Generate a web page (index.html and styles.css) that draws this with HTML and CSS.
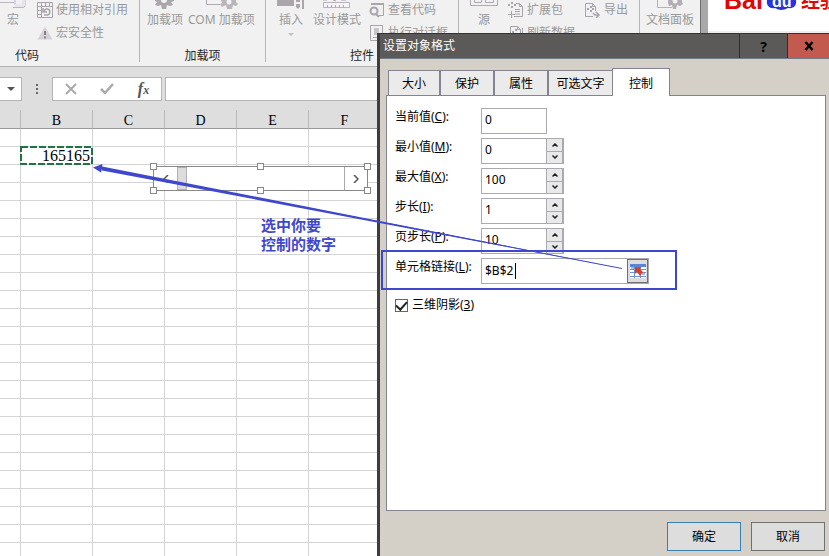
FILE: index.html
```html
<!DOCTYPE html>
<html lang="zh-CN">
<head>
<meta charset="utf-8">
<title>设置对象格式</title>
<link rel="stylesheet" href="styles.css">
</head>
<body>
<main class="screen">
  <div class="topbar">
    <div class="ribbon">
      <section class="group group-code">
        <div class="tools">
          <button class="big big-macro"><svg class="art" width="28" height="10" viewBox="0 0 28 10"><path d="M0 2.500H15M14 7.500H24a2 2 0 0 0 2-2V0M16 0v5" fill="none" stroke="#bdb5c3"/><path d="M15 4l2 3h7l2-2V0h-3v5z" fill="#e9e4ec"/></svg>宏</button>
          <div class="stack">
            <button class="small"><svg width="16" height="16" viewBox="0 0 16 16" fill="none" stroke="#a9a4ac"><path d="M.5.500h15v15H.5zM.5 4.500h15M4.500.500v15M8.500.500v4M12.500.500v4M.5 8.500h4M.5 12.500h4"/><path d="M7 13h3a3 3 0 1 0-3-4M6 6v4h4" stroke-width="1.500"/></svg>使用相对引用</button>
            <button class="small"><svg width="16" height="16" viewBox="0 0 16 16"><path d="M8 1.500l7.500 13H.5z" fill="#d8d2d8"/><path d="M8 6v4M8 11.500v2" stroke="#858585" stroke-width="2"/></svg>宏安全性</button>
          </div>
        </div>
        <h2>代码</h2>
      </section>
      <section class="group group-addins">
        <div class="tools">
          <button class="big"><svg class="art" width="22" height="10" viewBox="0 0 22 10"><path d="M1 0h19v1l-3 1 2 3-3 1-3-1-1 4H8L7 5 4 6 1 5l2-3-2-1z" fill="#aaa6aa"/><path d="M7 0h6a3 3 0 0 1-6 0z" fill="#f1f1f1"/></svg>加载项</button>
          <button class="big"><svg class="art" width="36" height="10" viewBox="0 0 36 10"><path d="M3.500 0v4.500H17" fill="none" stroke="#b0a6b4"/><path d="M18 0h15v2l2 2-2 2-3-1-1 4h-5l-1-4-4 2-2-3 2-1z" fill="#bab5bb"/><circle cx="26" cy="2" r="2.500" fill="#f1f1f1"/></svg>COM 加载项</button>
        </div>
        <h2>加载项</h2>
      </section>
      <section class="group group-controls">
        <div class="tools">
          <button class="big"><svg class="art" width="28" height="10" viewBox="0 0 28 10"><path d="M0 0h17v6H0zM19 0h4v2h-4zM19 4h4v3l-2 2-2-2zM25 0h2v9h-2z" fill="#aaa6aa"/></svg>插入<svg class="drop" width="6" height="4" viewBox="0 0 6 4"><path d="M0 0h6L3 3z" fill="#c0c0c0"/></svg></button>
          <button class="big"><svg class="art" width="28" height="10" viewBox="0 0 28 10"><path d="M.5 2.500h26v5H.5z" fill="#f7f3f9" stroke="#bbb1c0"/><path d="M4.500 5v2M8.500 5v2M12.500 5v2M16.500 5v2M20.500 5v2M0 0h4M10 0l3 1M18 0h5" stroke="#aaa6aa"/></svg>设计模式</button>
          <div class="stack">
            <button class="small"><svg width="16" height="16" viewBox="0 0 16 16" fill="none" stroke="#a9a4ac"><path d="M3 1.500h11.500v12H10"/><path d="M2 1h13v2H2z" fill="#aaa6aa" stroke="none"/><circle cx="5" cy="9" r="3.500" stroke-width="2"/><path d="M7 12l3 3" stroke-width="2"/></svg>查看代码</button>
            <button class="small"><svg width="16" height="16" viewBox="0 0 16 16" fill="none" stroke="#a9a4ac"><path d="M1.500.500h12v15h-12z"/><path d="M5 3h5v7H5z" fill="#c9c4ca" stroke="none"/><path d="M4 12.500h7"/></svg>执行对话框</button>
          </div>
        </div>
        <h2>控件</h2>
      </section>
      <section class="group group-xml">
        <div class="tools">
          <button class="big"><svg class="art" width="28" height="10" viewBox="0 0 28 10" fill="none" stroke="#b0a9b3"><path d="M.5 0v5.500h27V0M4.500 0v2.500h7V0M15.500 0v2.500h8V0"/></svg>源</button>
          <div class="stack">
            <button class="small"><svg width="16" height="16" viewBox="0 0 16 16" fill="none" stroke="#a9a4ac"><path d="M8 1.500h3.500l3 3v10H6M11.500 1.500v3h3M7 7.500h5M7 9.500h5M7 12h5M3.500 9v7M0 12.500h7"/><path d="M0 3h2M3 1h2M3 5h2M6 3h2" stroke-width="2"/></svg>扩展包</button>
            <button class="small"><svg width="16" height="16" viewBox="0 0 16 16" fill="none" stroke="#a9a4ac"><path d="M2.500 15V1.500h7l3 3V8M9.500 1.500v3h3M14.500 3v10"/><path d="M4 7h2M7 5h2M7 9h2" stroke-width="2"/></svg>刷新数据</button>
          </div>
          <div class="stack">
            <button class="small"><svg width="16" height="16" viewBox="0 0 16 16" fill="none" stroke="#a9a4ac"><path d="M8 14.500H.5v-13h7l3 3V9M7.500 1.500v3h3"/><path d="M2 7h2M5 5h2M5 9h2M7 7h2" stroke-width="2"/><path d="M8 11l2 2h4M11 10l3 3-3 3" stroke-width="1.500"/></svg>导出</button>
          </div>
        </div>
      </section>
      <section class="group group-modify">
        <div class="tools">
          <button class="big"><svg class="art" width="28" height="10" viewBox="0 0 28 10"><path d="M1.500 0v7.500H16" fill="none" stroke="#b7afbb"/><path d="M12 0h14v2l1 2-3 2-3-1-1 4h-3l-1-4-3 1-1-3z" fill="#b3aeb4"/><circle cx="19" cy="1" r="2.500" fill="#f1f1f1"/></svg>文档面板</button>
        </div>
      </section>
    </div>
    <aside class="brand">
      <svg width="112" height="31" viewBox="0 0 112 31" role="img" aria-label="Baidu 经验">
        <text x="7" y="9" class="logo-red logo-latin">Bai</text>
        <path d="M50 0C49 6 53 9 58 8Q64 12 71 8C77 9 80 5 79 0z" fill="#2932e1"/>
        <text x="55" y="7" class="logo-du">du</text>
        <text x="84" y="8" class="logo-red logo-cjk">经验</text>
      </svg>
    </aside>
  </div>

  <div class="formula">
    <button class="namebox" aria-label="名称框"><svg width="8" height="4" viewBox="0 0 8 4"><path d="M0 0h8L4 4z" fill="#555"/></svg></button>
    <svg class="dots" width="2" height="10" viewBox="0 0 2 10"><path d="M0 0h2v2H0zM0 4h2v2H0zM0 8h2v2H0z" fill="#666"/></svg>
    <div class="fxbox">
      <button aria-label="取消输入"><svg width="12" height="12" viewBox="0 0 12 12"><path d="M1 1l10 10M11 1L1 11" stroke="#aaa" stroke-width="2"/></svg></button>
      <button aria-label="输入"><svg width="14" height="12" viewBox="0 0 14 12"><path d="M1 6l4 4 8-9" fill="none" stroke="#aaa" stroke-width="2.500"/></svg></button>
      <button class="fx" aria-label="插入函数">f<small>x</small></button>
    </div>
    <input class="formula-input" type="text" aria-label="编辑栏">
  </div>

  <div class="sheet">
    <table class="cells">
      <colgroup><col class="col-first"><col class="col"><col class="col"><col class="col"><col class="col"><col class="col"><col></colgroup>
      <thead><tr><th></th><th>B</th><th>C</th><th>D</th><th>E</th><th>F</th><th></th></tr></thead>
      <tbody id="rows"></tbody>
    </table>
    <svg class="ants" width="73" height="19" viewBox="0 0 73 19"><rect x="1" y="1" width="71" height="17" fill="none" stroke="#217346" stroke-width="2" stroke-dasharray="7 2"/></svg>
    <div class="scroller">
      <button aria-label="减小"><svg width="6" height="8" viewBox="0 0 6 8"><path d="M5 0L1 4l4 4" fill="none" stroke="#555" stroke-width="1.500"/></svg></button>
      <span class="thumb"></span>
      <button class="more" aria-label="增大"><svg width="6" height="8" viewBox="0 0 6 8"><path d="M1 0l4 4-4 4" fill="none" stroke="#555" stroke-width="1.500"/></svg></button>
      <i class="grip tl"></i><i class="grip tc"></i><i class="grip tr"></i><i class="grip bl"></i><i class="grip bc"></i><i class="grip br"></i>
    </div>
    <p class="note">选中你要<br>控制的数字</p>
  </div>

  <section class="dialog" role="dialog" aria-labelledby="dialog-title">
    <header class="titlebar">
      <h1 id="dialog-title">设置对象格式</h1>
      <button class="help" aria-label="帮助">?</button>
      <button class="close" aria-label="关闭"><svg width="10" height="10" viewBox="0 0 10 10"><path d="M1.500 1l7 8M8.500 1l-7 8" stroke="#000" stroke-width="2.500"/></svg></button>
    </header>
    <nav class="tabs" role="tablist">
      <button role="tab" class="tab">大小</button>
      <button role="tab" class="tab">保护</button>
      <button role="tab" class="tab">属性</button>
      <button role="tab" class="tab tab-wide">可选文字</button>
      <button role="tab" class="tab active" aria-selected="true">控制</button>
    </nav>
    <form class="panel">
      <div class="field"><label for="cur">当前值(<u>C</u>):</label><input id="cur" class="box" type="text" value="0"></div>
      <div class="field"><label for="min">最小值(<u>M</u>):</label><input id="min" class="box" type="text" value="0"><span class="spin"><button type="button" aria-label="最小值增加"><svg viewBox="0 0 6 4"><path d="M.5 3.500L3 1l2.500 2.500"/></svg></button><button type="button" aria-label="最小值减少"><svg viewBox="0 0 6 4"><path d="M.5.500L3 3 5.500.500"/></svg></button></span></div>
      <div class="field"><label for="max">最大值(<u>X</u>):</label><input id="max" class="box" type="text" value="100"><span class="spin"><button type="button" aria-label="最大值增加"><svg viewBox="0 0 6 4"><path d="M.5 3.500L3 1l2.500 2.500"/></svg></button><button type="button" aria-label="最大值减少"><svg viewBox="0 0 6 4"><path d="M.5.500L3 3 5.500.500"/></svg></button></span></div>
      <div class="field"><label for="step">步长(<u>I</u>):</label><input id="step" class="box" type="text" value="1"><span class="spin"><button type="button" aria-label="步长增加"><svg viewBox="0 0 6 4"><path d="M.5 3.500L3 1l2.500 2.500"/></svg></button><button type="button" aria-label="步长减少"><svg viewBox="0 0 6 4"><path d="M.5.500L3 3 5.500.500"/></svg></button></span></div>
      <div class="field"><label for="page">页步长(<u>P</u>):</label><input id="page" class="box" type="text" value="10"><span class="spin"><button type="button" aria-label="页步长增加"><svg viewBox="0 0 6 4"><path d="M.5 3.500L3 1l2.500 2.500"/></svg></button><button type="button" aria-label="页步长减少"><svg viewBox="0 0 6 4"><path d="M.5.500L3 3 5.500.500"/></svg></button></span></div>
      <div class="field"><label for="link">单元格链接(<u>L</u>):</label><span class="linkbox"><input id="link" type="text" value="$B$2"><i class="caret"></i><button type="button" class="picker" aria-label="选择单元格"><svg width="16" height="14" viewBox="0 0 16 14"><path d="M0 0h16v14H0z" fill="#fff"/><path d="M0 0h16v3H0z" fill="#5b86cf"/><path d="M0 5.500h16M0 8.500h16M0 12.500h16M4.500 3v11M10.500 3v11" stroke="#6f92cf"/><path d="M5 4.500h3M1 4h3M12 10h3" stroke="#9db8e6" stroke-width="2"/><path d="M5 3h6l-1 2 3 3-3 4-3-4-2 2z" fill="#d8402a"/></svg></button></span></div>
      <div class="check"><input id="shade" type="checkbox" checked><label for="shade">三维阴影(<u>3</u>)</label></div>
    </form>
    <footer class="actions"><button class="ok">确定</button><button>取消</button></footer>
  </section>

  <svg class="marks" width="829" height="556" viewBox="0 0 829 556" aria-hidden="true">
    <path d="M102 166.500L377 220.500 622 268.500 377 222.500 102 170.500z" fill="#3f48cc"/>
    <path d="M102 168.500L622 268.500" stroke="#3f48cc"/>
    <path d="M93 167.500l9.500-3.500-.5 4.500-1 4z" fill="#3f48cc"/>
    <rect x="382" y="251" width="294" height="38" fill="none" stroke="#3f48cc" stroke-width="2"/>
  </svg>
</main>
<script src="sheet.js"></script>
</body>
</html>
```
FILE: styles.css
```css
* { box-sizing: border-box; }
body { margin: 0; font: 12px/18px "Noto Sans", "Noto Sans CJK SC", sans-serif; color: #000; }
button { margin: 0; padding: 0; border: 0; background: none; font: inherit; color: inherit; }
input { font: inherit; color: inherit; }
h1, h2, p { margin: 0; font-size: 12px; font-weight: 400; }
svg { display: block; flex: none; }

.screen { position: relative; display: flex; flex-direction: column; height: 100vh; overflow: hidden; background: #fff; }

.topbar { display: flex; height: 67px; border-bottom: 1px solid #b2b2b2; background: #f1f1f1; }
.ribbon { display: flex; flex: none; color: #999; border-right: 1px solid #6f6f6f; }
.group { display: flex; flex-direction: column; width: 126px; height: 62px; border-right: 1px solid #b5b5b5; }
.group h2 { color: #262626; line-height: 20px; text-align: center; }
.group-code { width: 140px; }
.group-code h2 { padding-left: 15px; text-align: left; }
.group-controls { width: 193px; }
.group-xml { width: 181px; }
.group-modify { width: 60px; border-right: 0; }
.tools { display: flex; flex: none; height: 46px; white-space: nowrap; }
.big { display: flex; flex-direction: column; align-items: center; align-self: flex-start; line-height: 20px; }
.drop { margin-top: 3px; }
.stack { display: flex; flex: none; flex-direction: column; gap: 3px; }
.small { display: flex; align-items: center; gap: 3px; height: 20px; }
.group-code .tools { gap: 11px; }
.big-macro { width: 26px; }
.group-addins .tools { gap: 5px; padding-left: 7px; }
.group-controls .tools { gap: 8px; padding-left: 11px; }
.group-xml .tools { gap: 10px; padding-left: 11px; }
.group-modify .tools { justify-content: center; }
.brand { flex: 1; border-left: 7px solid #aaa9a9; background: linear-gradient(#fff 31px, #eee 31px); overflow: hidden; }
.brand svg { margin-left: 9px; }
.logo-red { fill: #e10602; font-weight: 700; }
.logo-latin { font-family: "Liberation Sans", sans-serif; font-size: 25px; }
.logo-cjk { font-family: "Noto Sans CJK SC", sans-serif; font-size: 19px; }
.logo-du { fill: #fff; font: 700 16px "Liberation Sans", sans-serif; }

.formula { display: flex; height: 43px; padding-top: 10px; background: #dedede; }
.namebox, .fxbox, .formula-input { height: 24px; border: 1px solid #b5b5b5; background: #fff; }
.namebox { width: 22px; padding-left: 7px; border-left: 0; }
.dots { margin: 7px 14px; }
.fxbox { display: flex; justify-content: space-around; align-items: center; width: 110px; }
.fx { font: italic 700 16px/18px "Liberation Serif", serif; color: #555; }
.fx small { font-size: 12px; }
.formula-input { flex: 1; margin-left: 3px; }

.sheet { position: relative; flex: 1; overflow: hidden; }
.cells { width: 100%; table-layout: fixed; border-collapse: separate; border-spacing: 0; font-family: "Liberation Serif", serif; }
.col-first { width: 21px; }
.col { width: 72px; }
.cells th { height: 19px; padding: 3px 0 0; border-right: 1px solid #b8b8b8; border-bottom: 1px solid #999; background: #dedede; font-size: 14px; line-height: 15px; font-weight: 400; }
.cells td { height: 18px; padding: 0 2px; border-right: 1px solid #d4d4d4; border-bottom: 1px solid #d4d4d4; font-size: 16px; line-height: 17px; text-align: right; }
.ants { position: absolute; left: 20px; top: 36px; }
.scroller { position: absolute; left: 153px; top: 56px; display: flex; width: 215px; height: 25px; border: 1px solid #888; background: #fff; }
.scroller button { display: grid; place-items: center; width: 23px; }
.thumb { width: 10px; border: 1px solid #b0b0b0; background: #dcdcdc; }
.scroller .more { margin-left: auto; border-left: 1px solid #aaa; }
.grip { position: absolute; width: 7px; height: 7px; border: 1px solid #888; background: #fff; }
.tl, .tc, .tr { top: -4px; }
.bl, .bc, .br { bottom: -4px; }
.tl, .bl { left: -4px; }
.tc, .bc { left: 103px; }
.tr, .br { right: -4px; }
.note { position: absolute; left: 261px; top: 106px; font-size: 15px; line-height: 19px; font-weight: 700; color: #3f48cc; }

.dialog { position: absolute; left: 377px; top: 33px; right: 0; bottom: 0; display: flex; flex-direction: column; border-left: 3px solid #3d3d40; background: #d4d0c8; }
.titlebar { display: flex; height: 26px; border-top: 1px solid #333; border-bottom: 1px solid #737986; background: #5b5a58; color: #fff; }
.titlebar h1 { flex: 1; padding-left: 3px; line-height: 24px; }
.titlebar button { display: grid; place-items: center; width: 48px; border-left: 1px solid #2e2e2e; color: #000; }
.titlebar .help { font: 700 14px "Noto Sans", sans-serif; }
.titlebar .close { width: 42px; background: #c25a50; }
.tabs { display: flex; align-items: flex-end; height: 37px; padding-left: 8px; }
.tab { width: 54px; height: 26px; padding-top: 2px; border: 1px solid #84848f; background: #ebebeb; }
.tab:first-child { width: 52px; }
.tab-wide { width: 65px; }
.active { z-index: 1; width: 58px; height: 28px; margin-left: -1px; border-bottom: 0; background: #fff; }
.panel { display: flex; flex: 1; flex-direction: column; gap: 4px; margin: -1px 3px 0 6px; padding: 12px 8px; border: 1px solid #84848f; background: #fff; }
.field { display: flex; height: 26px; }
.field label { width: 86px; }
.box, .linkbox { width: 66px; height: 26px; border: 1px solid #aaaab2; border-radius: 0; background: #fff; }
.box { padding: 0 0 4px 3px; }
.spin { display: flex; flex-direction: column; gap: 1px; width: 17px; padding: 1px 2px 1px 0; background: #aaaab2; }
.spin button { display: grid; flex: 1; place-items: center; background: #e9e9e9; }
.spin svg { width: 6px; height: 4px; fill: none; stroke: #222; stroke-width: 1.5; }
.linkbox { position: relative; display: flex; width: 168px; }
.linkbox input { flex: 1; min-width: 0; padding: 0 0 0 3px; border: 0; outline: 0; }
.caret { position: absolute; left: 33px; top: 4px; width: 1px; height: 16px; background: #000; }
.picker { display: grid; place-items: center; width: 21px; border: 1px solid #707070; background: #ddd; }
.check { display: flex; align-items: center; gap: 4px; margin-top: 8px; }
.check input { display: grid; place-items: center; width: 13px; height: 13px; margin: 0; border: 1px solid #666; background: #fff; appearance: none; }
.check input:checked::before { content: ""; width: 9px; height: 5px; border: solid #222; border-width: 0 0 2px 2px; transform: translateY(-1px) rotate(-48deg); }
.actions { display: flex; justify-content: flex-end; gap: 10px; padding: 11px 4px 5px; }
.actions button { width: 74px; height: 29px; border: 1px solid #707070; background: #ddd; }
.actions .ok { border-color: #3a7fb1; }
.marks { position: absolute; left: 0; top: 0; pointer-events: none; }
```
FILE: sheet.js
```js
const body = document.getElementById("rows");
for (let r = 1; r <= 24; r++) {
  const row = body.insertRow();
  for (let c = 0; c < 7; c++) {
    row.insertCell().textContent = r === 2 && c === 1 ? "165165" : "";
  }
}
```
